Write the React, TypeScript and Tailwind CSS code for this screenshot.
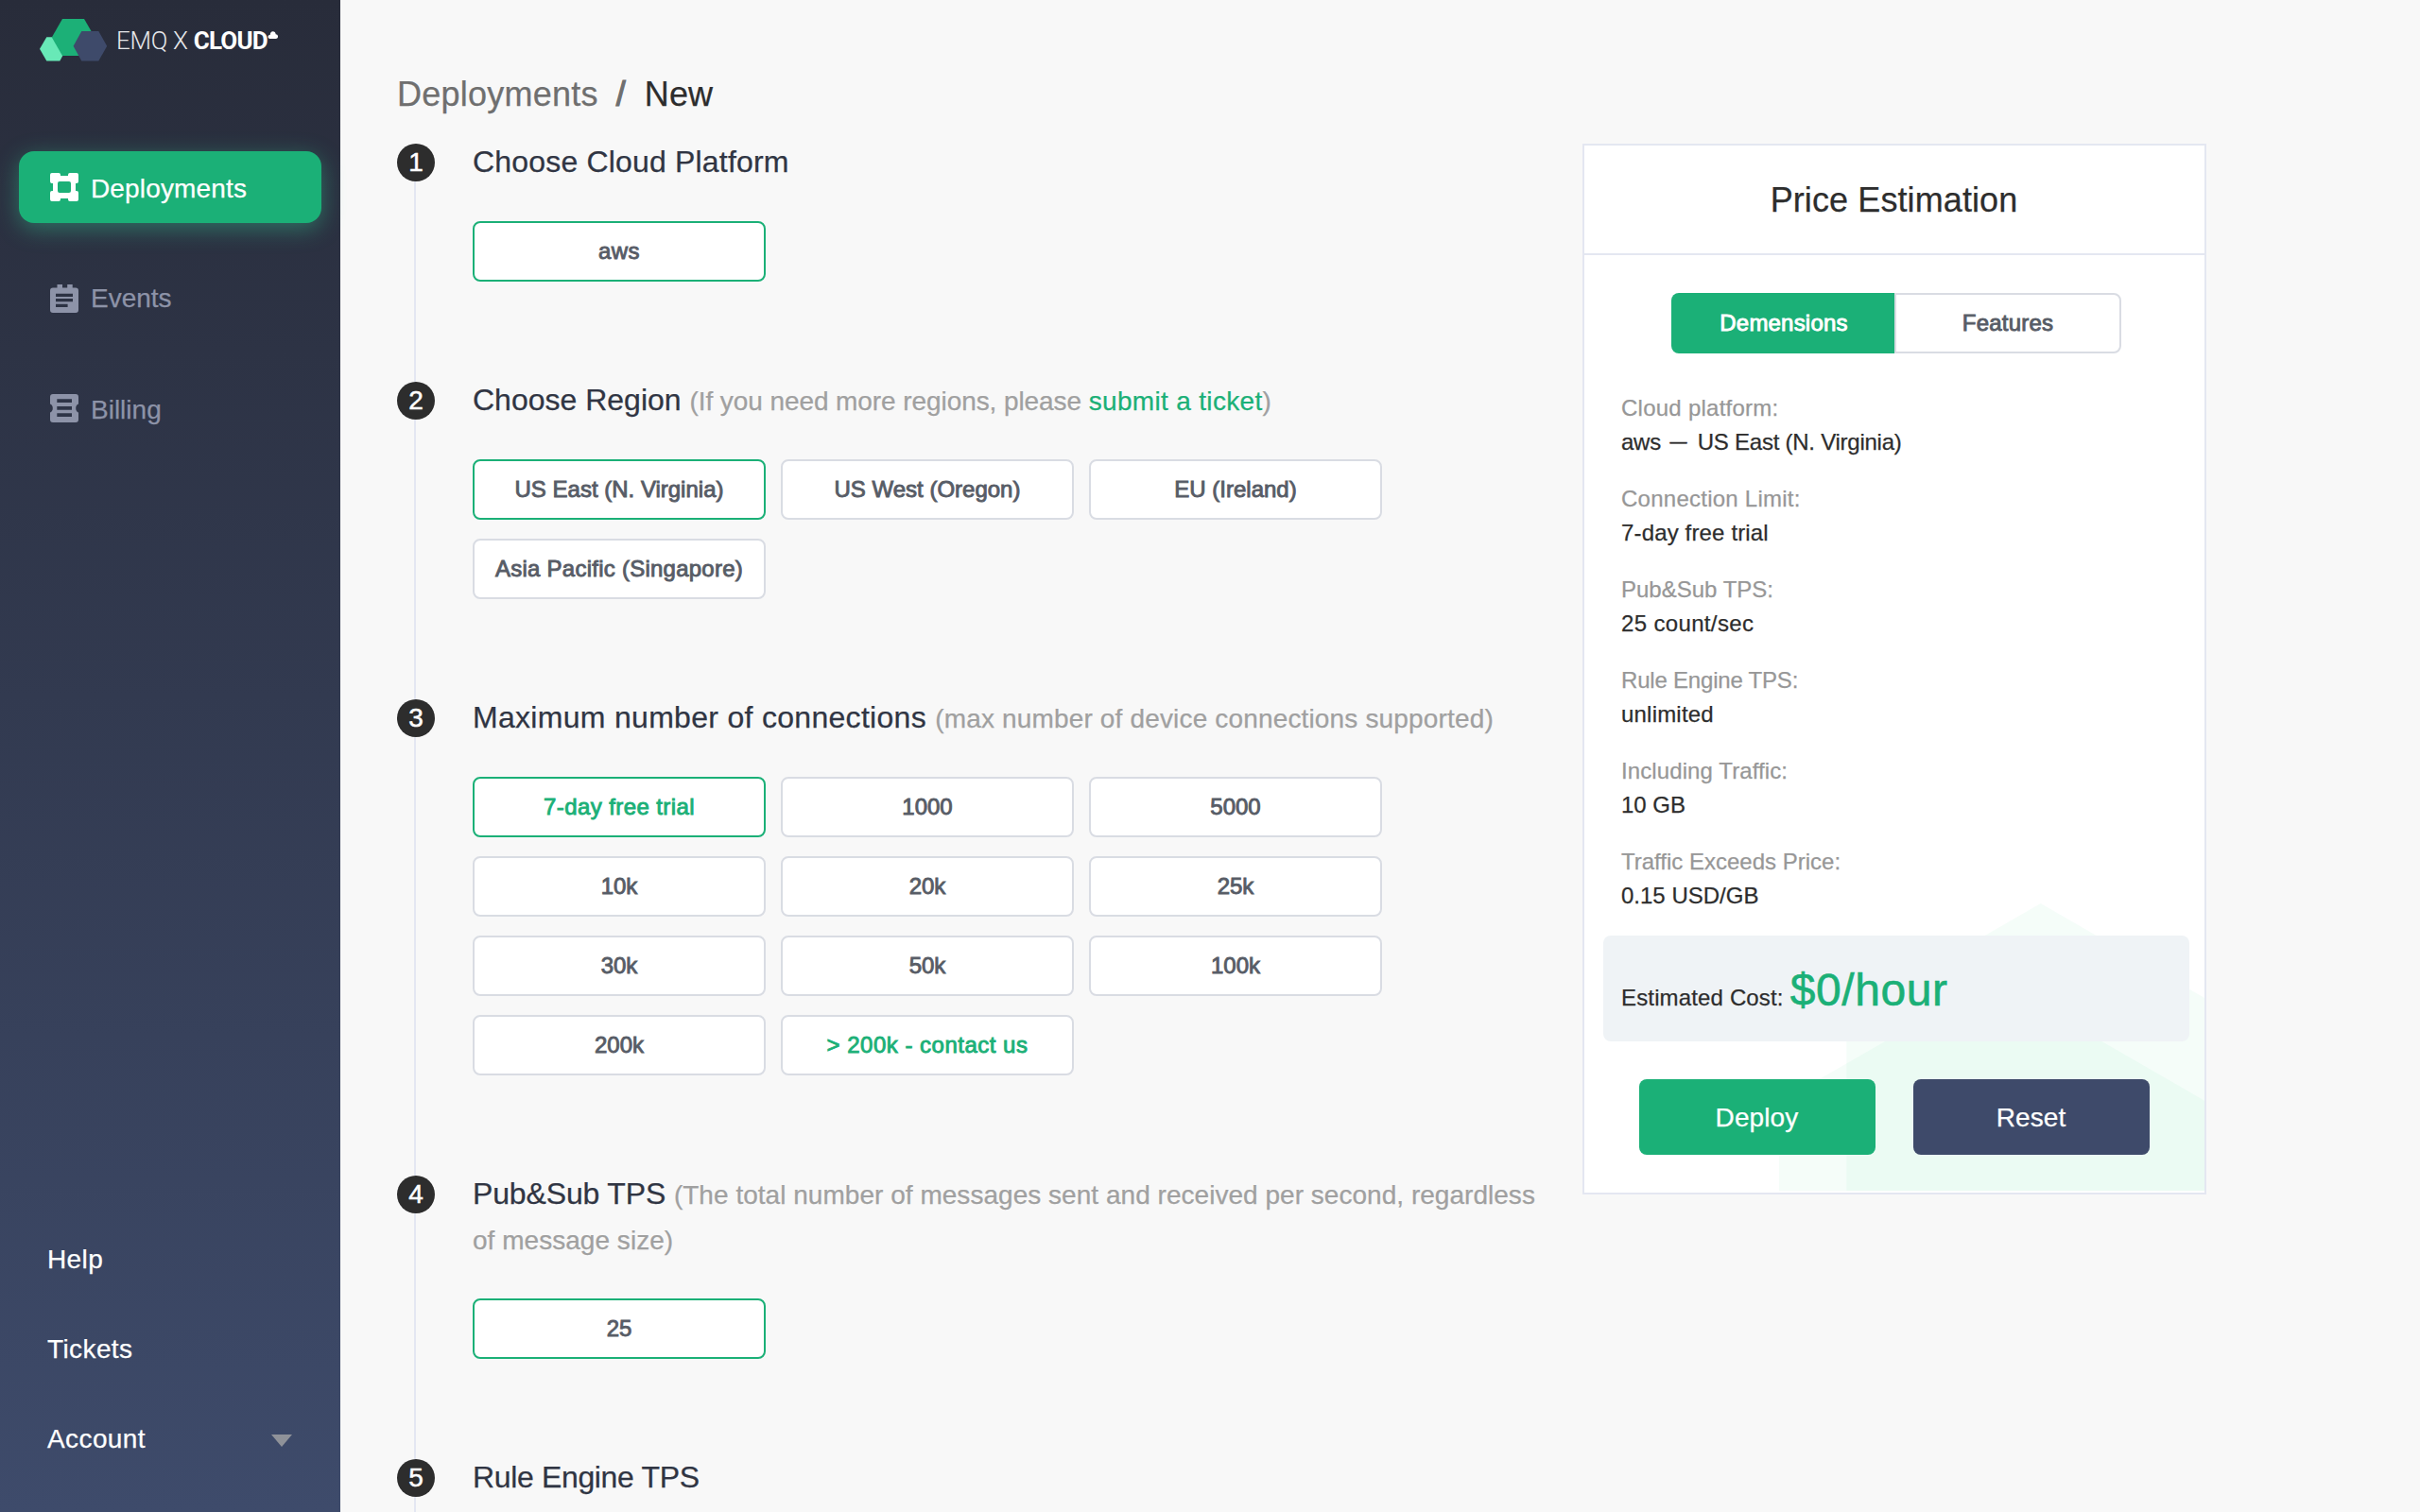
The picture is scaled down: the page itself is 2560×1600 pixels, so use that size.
import React from "react";

type Option = { label: string; selected?: boolean; green?: boolean; spacing?: string };
type StepData = {
  title: string;
  spacing: string;
  note?: React.ReactNode;
  noteSpacing?: string;
  options: Option[];
};

const steps: StepData[] = [
  {
    title: "Choose Cloud Platform",
    spacing: "tracking-[0.18px]",
    options: [{ label: "aws", selected: true, spacing: "tracking-[0.5px]" }],
  },
  {
    title: "Choose Region",
    spacing: "tracking-normal",
    noteSpacing: "tracking-[-0.08px]",
    note: (
      <>
        (If you need more regions, please{" "}
        <a className="tracking-[0.33px] text-[#1bb077]">submit a ticket</a>)
      </>
    ),
    options: [
      { label: "US East (N. Virginia)", selected: true },
      { label: "US West (Oregon)" },
      { label: "EU (Ireland)" },
      { label: "Asia Pacific (Singapore)", spacing: "tracking-[0.25px]" },
    ],
  },
  {
    title: "Maximum number of connections",
    spacing: "tracking-[0.3px]",
    noteSpacing: "tracking-[0.16px]",
    note: "(max number of device connections supported)",
    options: [
      { label: "7-day free trial", selected: true, green: true, spacing: "tracking-[0.4px]" },
      { label: "1000" },
      { label: "5000" },
      { label: "10k" },
      { label: "20k" },
      { label: "25k" },
      { label: "30k" },
      { label: "50k" },
      { label: "100k" },
      { label: "200k" },
      { label: "> 200k - contact us", green: true, spacing: "tracking-[0.5px]" },
    ],
  },
  {
    title: "Pub&Sub TPS",
    spacing: "tracking-[-0.15px]",
    noteSpacing: "tracking-[0.03px]",
    note: "(The total number of messages sent and received per second, regardless of message size)",
    options: [{ label: "25", selected: true }],
  },
  { title: "Rule Engine TPS", spacing: "tracking-[-0.35px]", options: [] },
];

const details: { label: string; labelSpacing?: string; value: React.ReactNode; valueSpacing?: string }[] = [
  {
    label: "Cloud platform:",
    labelSpacing: "tracking-[0.25px]",
    value: (
      <>
        aws <span className="mr-[2px] inline-block w-6 -translate-y-[3px] text-center text-[18px] leading-none [-webkit-text-stroke:0.5px]">—</span> US East (N. Virginia)
      </>
    ),
    valueSpacing: "tracking-[-0.25px]",
  },
  { label: "Connection Limit:", labelSpacing: "tracking-[0.25px]", value: "7-day free trial", valueSpacing: "tracking-[0.15px]" },
  { label: "Pub&Sub TPS:", value: "25 count/sec", valueSpacing: "tracking-[0.35px]" },
  { label: "Rule Engine TPS:", labelSpacing: "tracking-[-0.2px]", value: "unlimited", valueSpacing: "tracking-[0.2px]" },
  { label: "Including Traffic:", labelSpacing: "tracking-[0.1px]", value: "10 GB" },
  { label: "Traffic Exceeds Price:", value: "0.15 USD/GB" },
];

function Logo() {
  return (
    <div className="flex h-[46px] items-start pl-[42px]">
      <svg className="h-[46px] w-[72px] shrink-0" viewBox="42 20 72 46">
        <polygon points="49.3,39.3 63.3,39.3 70.3,51.8 63.3,64.5 49.3,64.5 42,51.8" fill="#68e9b7" />
        <polygon points="66,20 89,20 100.3,39.4 89,59 66,59 54.8,39.4" fill="#1cb077" />
        <polygon points="86.3,33 104.3,33 113.2,48.7 104.3,64.5 86.3,64.5 77.6,48.7" fill="#3e4a6a" />
      </svg>
      <div className="ml-[9px] mt-[6px] whitespace-pre font-['Roboto'] text-[26px] leading-[34px] text-white [-webkit-text-stroke:0px]">
        <span className="font-light tracking-[-0.3px] text-[#e6e7ea]">EMQ X </span>
        <span className="font-bold tracking-[-0.8px]">CLOUD</span>
      </div>
      <svg className="mt-[13px] h-[8px] w-[11px] shrink-0" viewBox="0 0 12 9" fill="#fff">
        <path d="M2.300 9a2.300 2.300 0 0 1-.3-4.500h.8C3 2 4.300.3 6.200.3c2 0 3.200 1.500 3.400 3.300A2.700 2.700 0 0 1 9.500 9z" />
      </svg>
    </div>
  );
}

function DeploymentsIcon() {
  return (
    <svg className="size-[30px]" viewBox="0 0 30 30" fill="currentColor">
      <path
        fillRule="evenodd"
        d="M2 0h7a2 2 0 0 1 2 2v1h8V2a2 2 0 0 1 2-2h7a2 2 0 0 1 2 2v7a2 2 0 0 1-2 2h-1v8h1a2 2 0 0 1 2 2v7a2 2 0 0 1-2 2h-7a2 2 0 0 1-2-2v-1h-8v1a2 2 0 0 1-2 2H2a2 2 0 0 1-2-2v-7a2 2 0 0 1 2-2h1v-8H2a2 2 0 0 1-2-2V2a2 2 0 0 1 2-2zM10 9a2 2 0 0 0-2 2v8a2 2 0 0 0 2 2h10a2 2 0 0 0 2-2v-8a2 2 0 0 0-2-2z"
      />
    </svg>
  );
}

function EventsIcon() {
  return (
    <svg className="size-[30px] translate-y-[2px]" viewBox="0 0 30 30" fill="currentColor">
      <path
        fillRule="evenodd"
        d="M7.500 0h5.500v3.500h5.200V0h5.500v3.500H27a3 3 0 0 1 3 3V27a3 3 0 0 1-3 3H3a3 3 0 0 1-3-3V6.500a3 3 0 0 1 3-3h4.500zM6 9.700V13h18V9.700zM6 15v3.200h18V15zM6 20.700V24h12.600v-3.300z"
      />
    </svg>
  );
}

function BillingIcon() {
  return (
    <svg className="size-[30px]" viewBox="0 0 30 30" fill="currentColor">
      <path
        fillRule="evenodd"
        d="M3 0h24a3 3 0 0 1 3 3v7.500c-1.500.5-2.800 2-2.800 4.500s1.300 4 2.800 4.500V27a3 3 0 0 1-3 3H3a3 3 0 0 1-3-3v-7.500c1.500-.5 2.800-2 2.800-4.500S1.500 11 0 10.500V3a3 3 0 0 1 3-3zM7.300 5.300V9H23V5.300zM7.300 13v3.700H23V13zM7.300 20.300V24H23v-3.700z"
      />
    </svg>
  );
}

function Sidebar() {
  return (
    <aside className="flex h-full w-[360px] shrink-0 flex-col bg-linear-to-b from-[#282c3a] to-[#3e4b6b] pt-5 text-[28px] leading-[40px]">
      <Logo />
      <nav className="mt-[94px] flex flex-col px-5 text-[#8d93a8]">
        <a className="flex h-[76px] items-center gap-[13px] rounded-2xl bg-[#1bb077] pl-[33px] tracking-[0.15px] text-white shadow-[0_6px_24px_rgba(52,195,143,0.45)]">
          <DeploymentsIcon />
          <span className="pt-[4px]">Deployments</span>
        </a>
        <a className="mt-10 flex h-[76px] items-center gap-[13px] pl-[33px]">
          <EventsIcon />
          <span className="pt-[4px]">Events</span>
        </a>
        <a className="mt-[42px] flex h-[76px] items-center gap-[13px] pl-[33px]">
          <BillingIcon />
          <span className="pt-[4px]">Billing</span>
        </a>
      </nav>
      <div className="mt-auto flex flex-col gap-[55px] pb-[57px] pl-[50px] tracking-[0.4px] text-white">
        <a>Help</a>
        <a>Tickets</a>
        <a className="flex items-center justify-between pr-[51px]">
          Account
          <svg className="mt-[3px] h-[13px] w-[22px]" viewBox="0 0 22 13" fill="#8f9299">
            <path d="M0 0h22L11 13z" />
          </svg>
        </a>
      </div>
    </aside>
  );
}

function OptionButton({ label, selected, green, spacing = "tracking-normal" }: Option) {
  return (
    <button
      className={`h-16 w-[310px] rounded-lg border-2 bg-white text-[24px] leading-none ${spacing} ${
        selected ? "border-[#1bb077]" : "border-[#d9dce3]"
      } ${green ? "text-[#1bb077]" : "text-[#575c66]"} [-webkit-text-stroke:0.9px]`}
    >
      {label}
    </button>
  );
}

function Step({ index, data }: { index: number; data: StepData }) {
  return (
    <li className="flex">
      <div className="flex w-10 shrink-0 flex-col items-center">
        <div className="flex size-10 shrink-0 items-center justify-center rounded-full bg-[#2d2d2d] text-[28px] leading-none text-white [-webkit-text-stroke:0.5px]">
          {index}
        </div>
        <div className="mr-[2px] w-[2px] grow bg-[#e4e7f2]" />
      </div>
      <div className="ml-10 w-[1140px] pb-[106px]">
        <h2 className={`-mt-[5px] text-[32px] leading-[48px] text-[#303543] ${data.spacing}`}>
          {data.title}{" "}
          {data.note && (
            <span className={`text-[28px] leading-[40px] text-[#a0a0a0] ${data.noteSpacing}`}>{data.note}</span>
          )}
        </h2>
        <div className="mt-[39px] flex w-[980px] flex-wrap gap-x-4 gap-y-5">
          {data.options.map((o) => (
            <OptionButton key={o.label} {...o} />
          ))}
        </div>
      </div>
    </li>
  );
}

function PriceCard() {
  return (
    <section className="relative mt-[152px] ml-[34px] h-[1112px] w-[660px] shrink-0 overflow-hidden border-2 border-[#e4e7f1] bg-white">
      <svg className="absolute right-0 bottom-[2px] h-[304px] w-[450px]" viewBox="1882 956 450 304" fill="#20cc80" fillOpacity="0.047">
        <polygon points="2158.700,956 2364,1074.500 2364,1312 1953.300,1312 1953.300,1074.500" />
        <polygon points="2108.700,1035.800 2335.400,1166.600 2335.400,1429 1882,1429 1882,1166.600" />
      </svg>
      <div className="relative">
        <h3 className="flex h-[116px] items-center justify-center border-b-2 border-[#e4e7f1] pt-[1px] pr-[1px] text-[36px] leading-none tracking-[0.1px] text-[#2d2d2d]">
          Price Estimation
        </h3>
        <div className="mt-10 ml-[92px] flex h-16 w-[476px] text-[24px] tracking-[0.2px] [-webkit-text-stroke:0.9px]">
          <button className="w-[236px] rounded-l-lg bg-[#1bb077] pl-[2px] text-white">Demensions</button>
          <button className="grow rounded-r-lg border-2 border-[#d9dce3] bg-white text-[#575c66]">Features</button>
        </div>
        <dl className="mt-[40px] flex flex-col gap-6 pl-[39px] text-[24px] leading-[36px]">
          {details.map((d) => (
            <div key={d.label}>
              <dt className={`text-[#979797] ${d.labelSpacing ?? ""}`}>{d.label}</dt>
              <dd className={`text-[#2d2d2d] ${d.valueSpacing ?? ""}`}>{d.value}</dd>
            </div>
          ))}
        </dl>
        <div className="mt-[24px] ml-5 flex h-28 w-[620px] items-baseline rounded-lg bg-[#eff3f6] pt-[28px] pl-[19px] text-[24px] leading-[60px] tracking-[0.15px] text-[#2d2d2d]">
          Estimated Cost:
          <span className="ml-[7px] text-[48px] leading-[60px] tracking-[0.6px] text-[#1bb077] [-webkit-text-stroke:0.6px]">$0/hour</span>
        </div>
        <div className="mt-10 flex gap-10 pl-[58px] text-[28px] tracking-[0.1px] text-white">
          <button className="h-20 w-[250px] rounded-lg bg-[#1bb077] pt-[2px] pr-[1px]">Deploy</button>
          <button className="h-20 w-[250px] rounded-lg bg-[#3e4a6a] pt-[2px] pr-[1px]">Reset</button>
        </div>
      </div>
    </section>
  );
}

export default function App() {
  return (
    <div className="flex h-[1600px] w-[2560px] overflow-hidden bg-[#f8f8f8] font-['Liberation_Sans',Arial,sans-serif] [-webkit-text-stroke:0.25px]">
      <Sidebar />
      <main className="flex items-start pl-[60px]">
        <div className="w-[1220px] pt-[76px]">
          <h1 className="flex h-[48px] items-center text-[36px] leading-[48px] text-[#2d2d2d]">
            <span className="tracking-[0.25px] text-[#6f6f6f]">Deployments</span>
            <span className="ml-[19px] mr-[20px] text-[#6f6f6f] [-webkit-text-stroke:1.2px]">/</span>
            <span className="tracking-[0.1px]">New</span>
          </h1>
          <ol className="mt-[28px] flex flex-col">
            {steps.map((s, i) => (
              <Step key={s.title} index={i + 1} data={s} />
            ))}
          </ol>
        </div>
        <PriceCard />
      </main>
    </div>
  );
}
